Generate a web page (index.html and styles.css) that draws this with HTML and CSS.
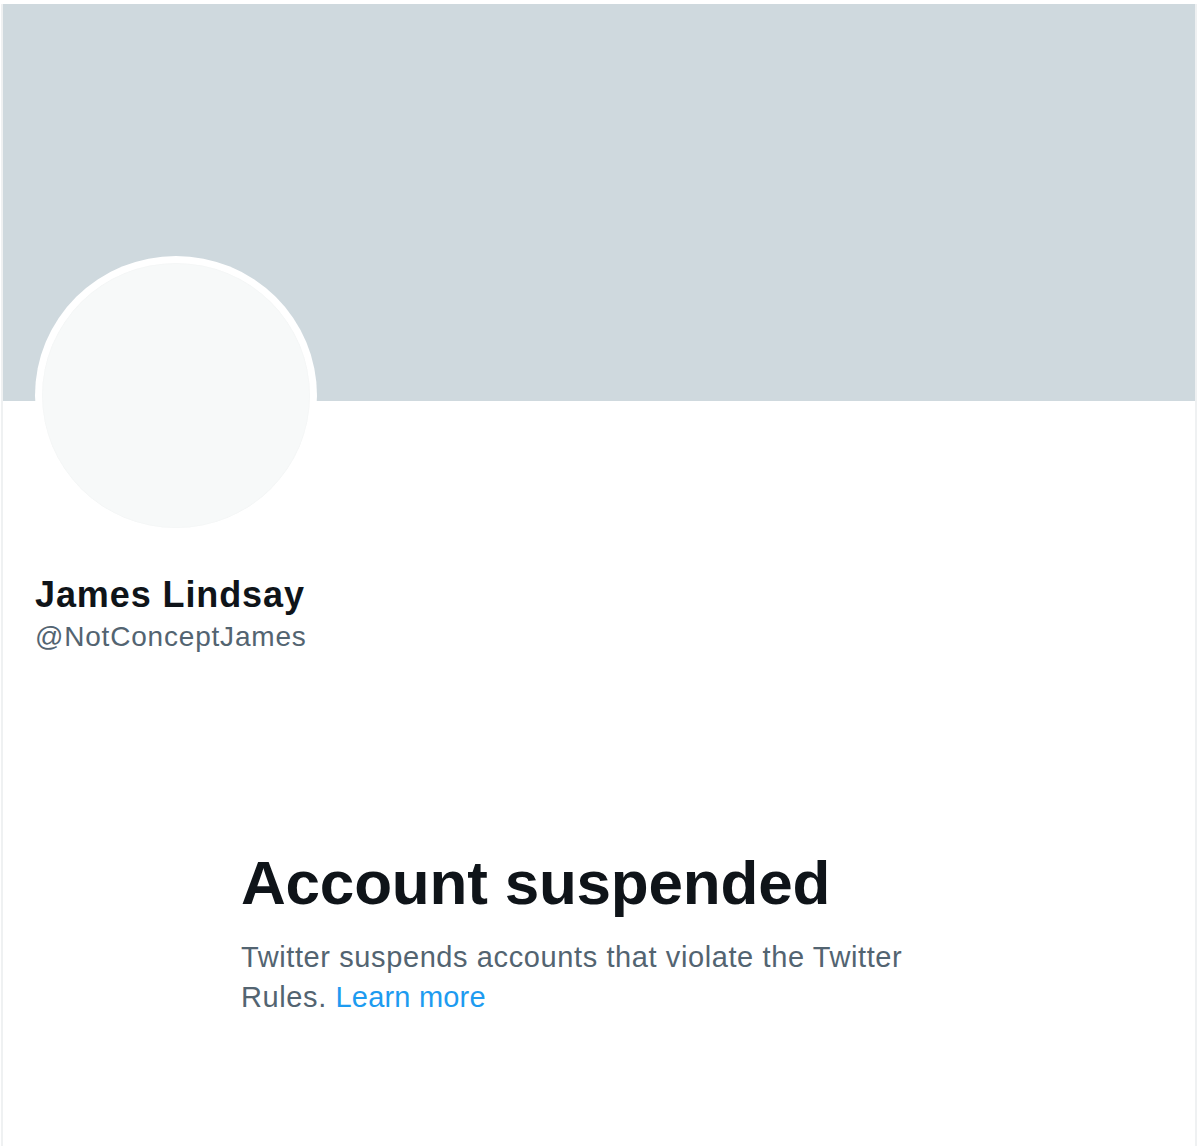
FILE: index.html
```html
<!DOCTYPE html>
<html lang="en">
<head>
<meta charset="utf-8">
<title>James Lindsay (@NotConceptJames)</title>
<link rel="stylesheet" href="styles.css">
</head>
<body>
<div class="frame">
  <div class="banner"></div>
  <div class="profile">
    <div class="avatar"><div class="avatar-inner"></div></div>
    <div class="name">James Lindsay</div>
    <div class="handle">@NotConceptJames</div>
  </div>
  <div class="notice">
    <h1 class="notice-title">Account suspended</h1>
    <p class="notice-text">Twitter suspends accounts that violate the Twitter Rules. <a class="link" href="#">Learn more</a></p>
  </div>
</div>
</body>
</html>
```

FILE: styles.css
```css
html, body {
  margin: 0;
  padding: 0;
  background: #ffffff;
}

body {
  font-family: "Liberation Sans", Arial, sans-serif;
  height: 1146px;
  overflow: hidden;
}

.frame {
  margin-left: 1px;
  margin-top: 4px;
  width: 1192px;
  height: 1142px;
  border-left: 2px solid #eff1f2;
  border-right: 2px solid #eff1f2;
}

.banner {
  height: 397px;
  background: #cfd9de;
}

.profile {
  padding-left: 32px;
}

.avatar {
  width: 282px;
  height: 279px;
  margin-top: -145px;
  border-radius: 50%;
  background: #ffffff;
  padding: 7px;
  box-sizing: border-box;
}

.avatar-inner {
  width: 100%;
  height: 100%;
  border-radius: 50%;
  background: #f7f9f9;
  box-shadow: inset 0 0 2px rgba(0, 0, 0, 0.04);
}

.name {
  margin-top: 38px;
  font-size: 36px;
  line-height: 44px;
  font-weight: 700;
  color: #0f1419;
  letter-spacing: 0.9px;
}

.handle {
  margin-top: 2px;
  font-size: 28px;
  line-height: 36px;
  color: #536471;
  letter-spacing: 0.8px;
}

.notice {
  margin-left: 238px;
  margin-top: 192px;
  width: 690px;
}

.notice-title {
  margin: 0;
  font-size: 62px;
  line-height: 72px;
  font-weight: 700;
  color: #0f1419;
  letter-spacing: -0.2px;
}

.notice-text {
  margin: 18px 0 0 0;
  font-size: 29px;
  line-height: 40px;
  color: #536471;
  letter-spacing: 0.6px;
}

.link {
  color: #1d9bf0;
  text-decoration: none;
  letter-spacing: 0.2px;
}
```
